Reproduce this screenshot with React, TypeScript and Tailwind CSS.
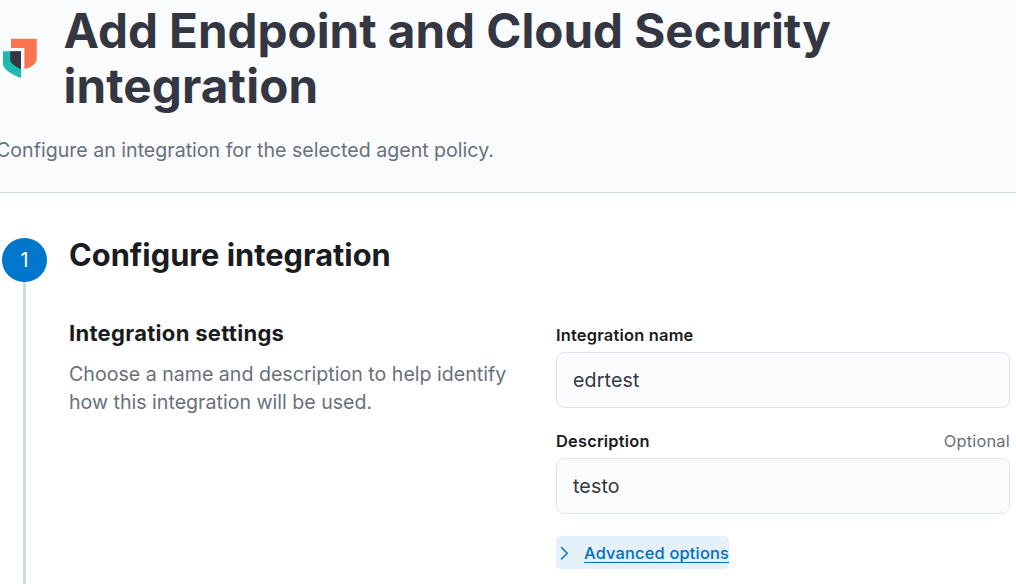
import React from "react";

function SecurityLogo() {
  return (
    <svg className="mt-[38px] h-10 w-[34px] shrink-0" viewBox="0 0 34 40">
      <path fill="#FA744E" d="M8 .7h25.700V21c0 4.200-5 8.500-12.300 10V10H8z" />
      <path fill="#1DBAB0" d="M0 13.300h18V40C7 36 0 30.500 0 26z" />
      <path fill="#343741" d="M7.200 13.300H18V31C11.500 28.500 7.200 25 7.200 21z" />
    </svg>
  );
}

function Field({ label, value, optional }: { label: string; value: string; optional?: boolean }) {
  return (
    <div>
      <div className="flex h-6 items-center justify-between text-[16.400px] tracking-[0.22px]">
        <label className="font-semibold text-[#1a1c21]">{label}</label>
        {optional && <span className="text-[#69707d]">Optional</span>}
      </div>
      <input
        aria-label={label}
        defaultValue={value}
        className="mt-[5px] block h-14 w-full rounded-[8px] border border-[#e1e4f2] bg-[#fbfcfd] px-4 text-[19.600px] tracking-[0.15px] text-[#343741] outline-none"
      />
    </div>
  );
}

export default function App() {
  return (
    <div className="flex h-[584px] w-[1016px] flex-col overflow-hidden bg-white font-['Inter',sans-serif]">
      <header className="h-[193px] shrink-0 border-b border-[#d3dae6] bg-[#fafbfd]">
        <div className="flex pl-[3px]">
          <SecurityLogo />
          <h1 className="ml-[26.500px] mt-[3px] text-[47.600px] leading-[55px] font-bold text-[#343741]">
            <span className="tracking-[-0.030px]">Add Endpoint and Cloud Security</span>
            <br />
            <span className="tracking-[0.120px]">integration</span>
          </h1>
        </div>
        <p className="-ml-1 mt-[23px] text-[19.600px] leading-[28px] whitespace-nowrap text-[#69707d]">
          Configure an integration for the selected agent policy.
        </p>
      </header>
      <main className="flex min-h-0 flex-1 pl-[2px]">
        <div className="flex w-[45px] shrink-0 flex-col items-center pt-[45px]">
          <span className="flex h-[44px] w-[45px] shrink-0 items-center justify-center rounded-full bg-[#0077cc] pt-[1px] text-[19.600px] text-white">
            1
          </span>
          <span className="w-[3px] flex-1 bg-[#d3dae6]" />
        </div>
        <section className="ml-[22px] w-[487px] shrink-0 pt-[42px]">
          <h2 className="text-[30.800px] leading-10 font-bold text-[#1a1c21]">Configure integration</h2>
          <h3 className="mt-[42px] text-[22px] leading-8 font-bold tracking-[0.3px] text-[#1a1c21]">Integration settings</h3>
          <p className="mt-[11px] text-[19.600px] leading-[28px] text-[#69707d]">
            Choose a name and description to help identify
            <br />
            how this integration will be used.
          </p>
        </section>
        <section className="flex w-[454px] shrink-0 flex-col items-start gap-[21px] pt-[130px] [&>div]:w-full">
          <Field label="Integration name" value="edrtest" />
          <Field label="Description" value="testo" optional />
          <button className="mt-[1px] flex h-[33px] items-center rounded-[5px] bg-[#e4f0fa] text-[16.400px] font-medium tracking-[0.180px] text-[#0071c2]">
            <svg className="ml-1 h-4 w-[10px]" viewBox="0 0 10 16" fill="none" stroke="currentColor" strokeWidth="1.500" strokeLinecap="round" strokeLinejoin="round">
              <path d="M1.500 2.500 7.200 8.300l-5.700 5.700" />
            </svg>
            <span className="ml-[14px] mt-[2px] underline decoration-[1px] underline-offset-[3px]">Advanced options</span>
          </button>
        </section>
      </main>
    </div>
  );
}
